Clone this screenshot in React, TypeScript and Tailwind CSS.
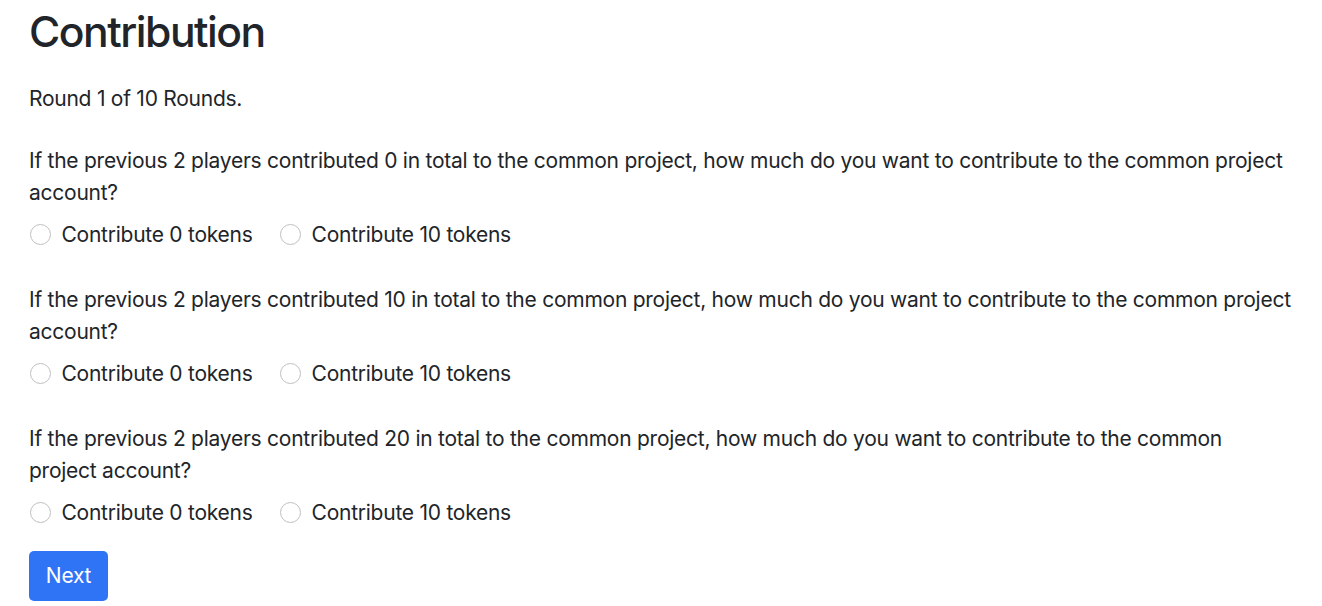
import React from "react";

const questions = [
  ["If the previous 2 players contributed 0 in total to the common project, how much do you want to contribute to the common project", "account?"],
  ["If the previous 2 players contributed 10 in total to the common project, how much do you want to contribute to the common project", "account?"],
  ["If the previous 2 players contributed 20 in total to the common project, how much do you want to contribute to the common", "project account?"],
];

function Radio({ label, name }: { label: string; name: string }) {
  return (
    <label className="flex items-start cursor-pointer">
      <input
        type="radio"
        name={name}
        className="appearance-none w-[21px] h-[21px] mt-[5px] rounded-full border border-[#bfbfbf] bg-white shrink-0"
      />
      <span className="ml-[10.5px]">{label}</span>
    </label>
  );
}

export default function App() {
  return (
    <div className="min-h-[606px] bg-white text-[#212529] font-['Inter',sans-serif] text-[21px] leading-[32px] tracking-[-0.25px] pl-[30px] pr-[30px] pt-[6px]">
      <h2 className="text-[42.67px] leading-[51px] font-medium tracking-[-1.5px] -ml-[1px]">Contribution</h2>
      <p className="mt-[26px] -ml-[1px]">Round 1 of 10 Rounds.</p>
      <div className="mt-[30px] flex flex-col gap-[33px]">
        {questions.map((q, i) => (
          <div key={i} className="flex flex-col">
            <div className="whitespace-nowrap -ml-[1px]">
              {q[0]}
              <br />
              {q[1]}
            </div>
            <div className="mt-[10px] flex gap-[27.5px] h-[32px]">
              <Radio name={`q${i}`} label="Contribute 0 tokens" />
              <Radio name={`q${i}`} label="Contribute 10 tokens" />
            </div>
          </div>
        ))}
      </div>
      <button className="mt-[22px] h-[50px] w-[79px] rounded-[5px] bg-[#3074f6] text-white text-[21px] leading-[32px] -ml-px">
        Next
      </button>
    </div>
  );
}
